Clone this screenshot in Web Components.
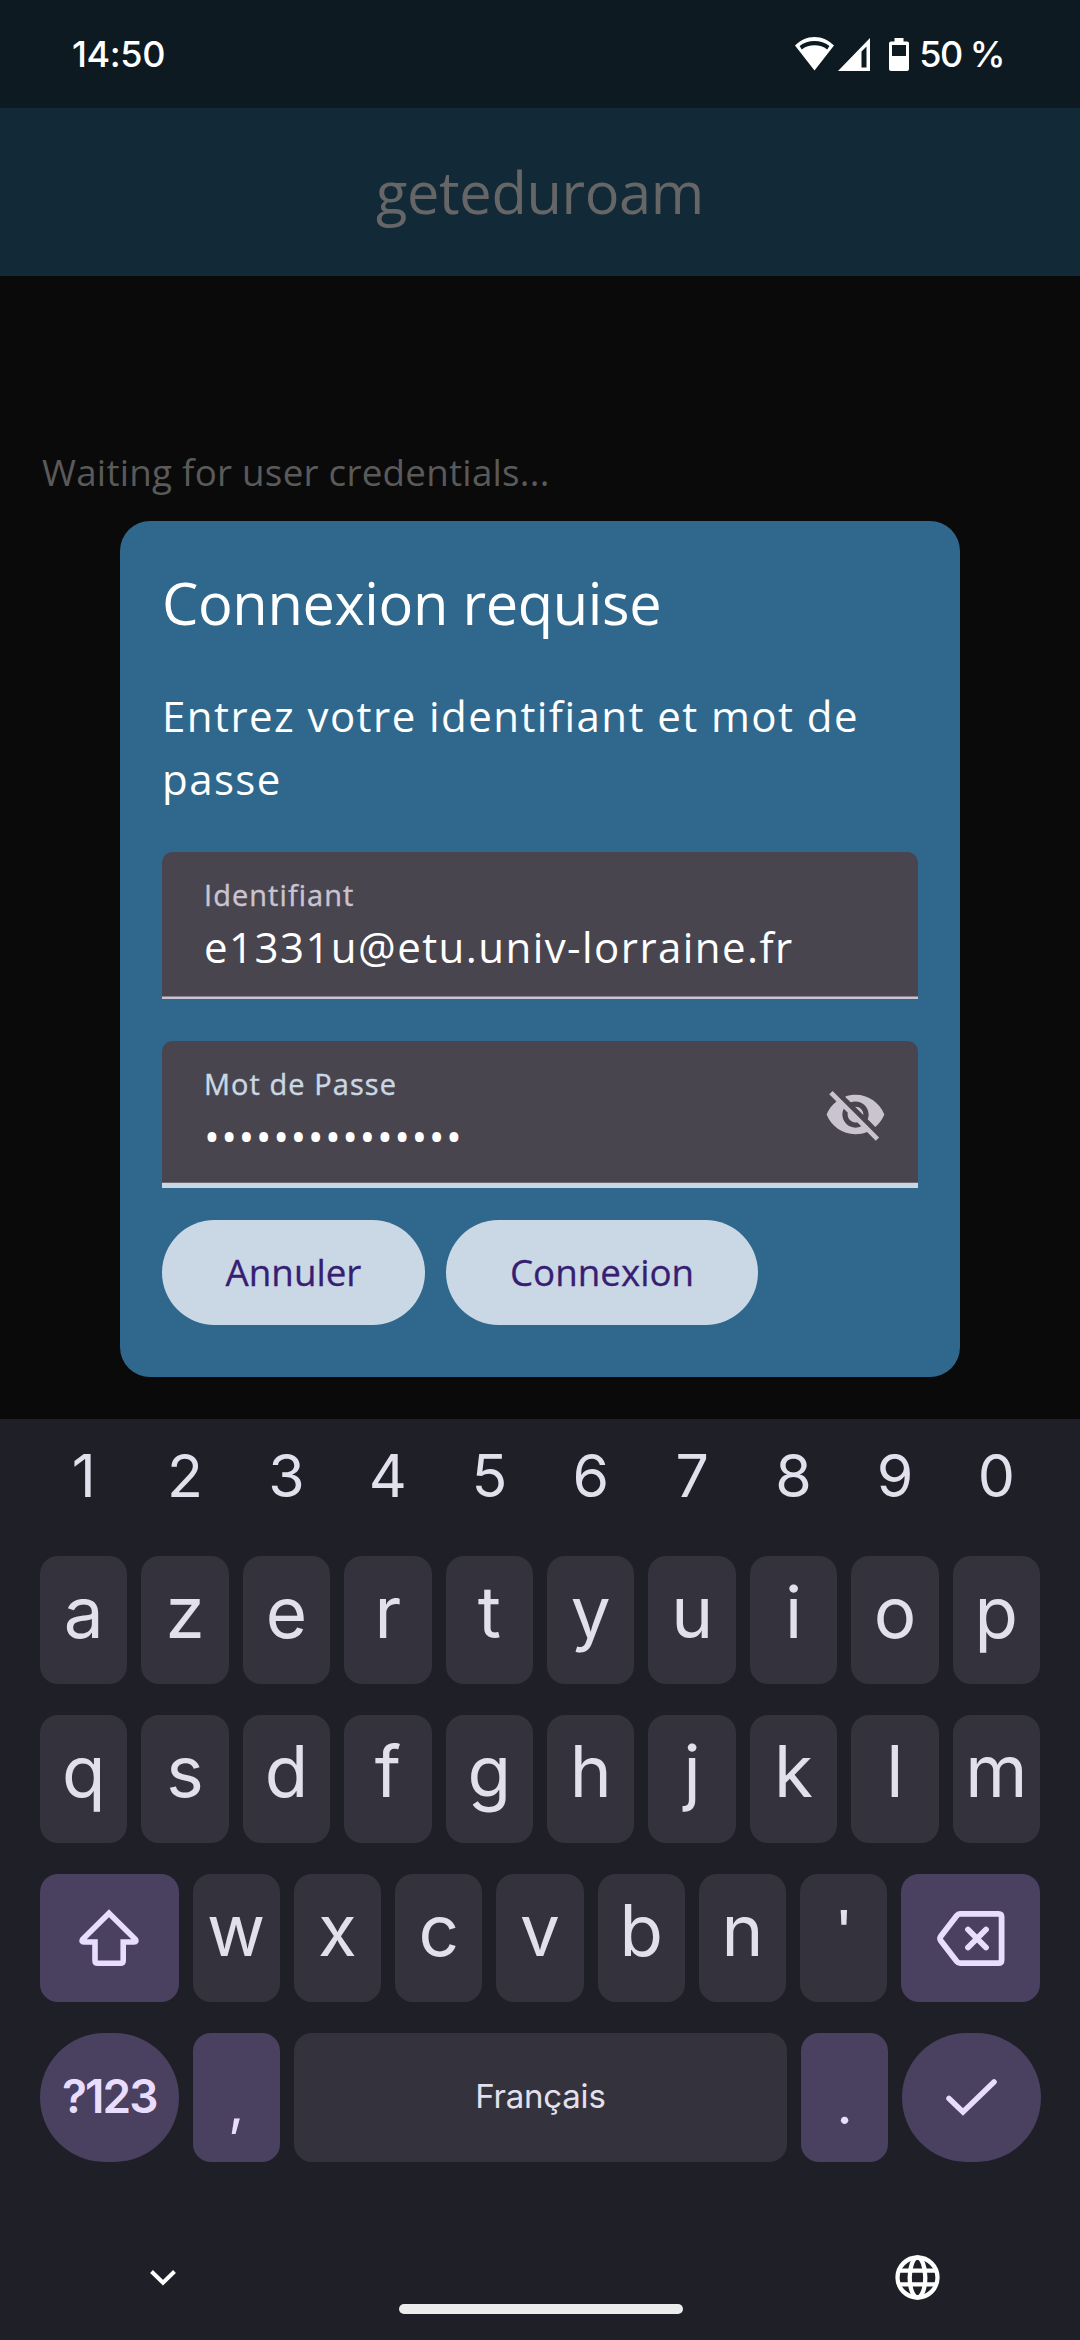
<!DOCTYPE html>
<html lang="fr"><head><meta charset="utf-8"><title>geteduroam</title>
<style>html,body{margin:0;background:#0a0a0a}</style></head><body>
<phone-screen></phone-screen>
<script>
const def=(name,html)=>customElements.define(name,class extends HTMLElement{
  constructor(){super();this.attachShadow({mode:'open'}).innerHTML=typeof html==='function'?html(this):html;}
});
def('status-bar',`<style>
:host{display:flex;align-items:center;justify-content:space-between;box-sizing:border-box;height:108px;padding:0 76px 0 72px;background:#0d1a22;color:#fff;font:500 36px Inter,sans-serif;letter-spacing:-.400px}
.r{display:flex;align-items:center;letter-spacing:-1.500px}svg{display:block}
</style><span>14:50</span><div class="r">
<svg width="39" height="34" viewBox="0 0 39 34" fill="#fff" style="margin-right:4px"><path fill-rule="evenodd" d="M19.5 0C12 0 5.2 3.2 0 8.600L19.500 33.500L39 8.600C33.800 3.200 27 0 19.500 0ZM4.600 9.100C8.700 5.400 14 3.900 19.500 3.900S30.300 5.400 34.400 9.100L32.200 12.400C28.600 9.500 24.200 8.200 19.500 8.200S10.400 9.500 6.800 12.400Z"/></svg>
<svg width="32" height="33" viewBox="0 0 32 33" fill="#fff" style="margin-right:19px"><path fill-rule="evenodd" d="M32 0V33H0ZM23.500 13.500V29.500H28.500V8.500Z"/></svg>
<svg width="20" height="33" viewBox="0 0 20 33" fill="#fff" style="margin-right:10px"><path fill-rule="evenodd" d="M5.500 0H14.500V3.500H18Q20 3.500 20 5.500V31Q20 33 18 33H2Q0 33 0 31V5.500Q0 3.500 2 3.500H5.500ZM3 7V18H17V7Z"/></svg>
<span>50 %</span></div>`);
def('app-header',`<style>:host{display:flex;align-items:center;justify-content:center;height:168px;box-sizing:border-box;padding-bottom:2px;background:#122937;color:#666;font:400 57.75px "Open Sans",sans-serif;letter-spacing:-.350px}</style><span><slot></slot></span>`);
def('text-field',el=>`<style>
:host{display:flex;align-items:center;box-sizing:border-box;height:147px;padding:0 31px 0 42px;background:#49454f;border-radius:10.5px 10.5px 0 0;color:#fff;font-family:"Open Sans",sans-serif;box-shadow:inset 0 -2.600px #cac4d0}
:host([focused]){box-shadow:inset 0 -5.250px #c9d8e4}
.c{flex:1;height:105px}.l{font-size:28.900px;-webkit-text-stroke:.4px currentColor;line-height:42px;padding-top:1px;height:41px;letter-spacing:1.100px;color:#cac4d0}
:host([focused]) .l{color:#c9d8e4}.v{font-size:42px;line-height:63px;letter-spacing:1.440px;font-variant-ligatures:none}
:host([focused]) .v{letter-spacing:1.500px}
</style><div class="c"><div class="l">${el.getAttribute('label')}</div><div class="v">${el.getAttribute('value')}</div></div><slot></slot>`);
def('pill-button',`<style>:host{display:flex;align-items:center;justify-content:center;box-sizing:border-box;height:105px;padding-bottom:2px;border-radius:53px;background:#c9d8e4;color:#381e72;font:500 36.75px "Open Sans",sans-serif;-webkit-text-stroke:.3px currentColor}</style><span><slot></slot></span>`);
def('login-dialog',`<style>
:host{position:absolute;left:120px;top:521px;width:840px;height:856px;box-sizing:border-box;padding:42px;border-radius:30px;background:#2f688c;color:#fff;font-family:"Open Sans",sans-serif;display:flex;flex-direction:column}
h1{margin:0 0 42px;font-size:57.750px;font-weight:400;line-height:79px;letter-spacing:-.380px}
p{margin:0 0 42px;font-size:42px;line-height:63px;letter-spacing:1.440px;font-variant-ligatures:none}
text-field+text-field{margin-top:42px}.b{display:flex;gap:21px;margin-top:32px}
</style><h1>Connexion requise</h1><p>Entrez votre identifiant et mot de<br>passe</p>
<text-field label="Identifiant" value="e1331u@etu.univ-lorraine.fr"></text-field>
<text-field focused label="Mot de Passe" value="•••••••••••••••"><svg width="63" height="63" viewBox="0 0 24 24" fill="#cac4d0"><path d="M12 7c2.760 0 5 2.240 5 5 0 .65-.13 1.260-.36 1.830l2.920 2.920c1.510-1.260 2.700-2.890 3.430-4.750-1.730-4.390-6-7.500-11-7.500-1.400 0-2.740.25-3.980.7l2.160 2.160C10.740 7.130 11.350 7 12 7zM2 4.270l2.280 2.280.46.46C3.080 8.300 1.780 10.020 1 12c1.730 4.390 6 7.500 11 7.500 1.550 0 3.030-.3 4.380-.84l.42.42L19.730 22 21 20.730 3.270 3 2 4.270zM7.530 9.800l1.550 1.550c-.05.21-.08.43-.08.65 0 1.660 1.340 3 3 3 .22 0 .44-.03.65-.08l1.550 1.550c-.67.33-1.410.53-2.200.53-2.760 0-5-2.240-5-5 0-.79.2-1.530.53-2.200zm4.310-.78l3.150 3.150.02-.16c0-1.660-1.340-3-3-3l-.17.01z"/></svg></text-field>
<div class="b"><pill-button style="width:263px">Annuler</pill-button><pill-button style="width:312px">Connexion</pill-button></div>`);
def('key-cap',`<style>
:host{display:flex;align-items:center;justify-content:center;flex:1 1 0;min-width:0;box-sizing:border-box;height:128px;padding-bottom:15.600px;border-radius:18px;background:#34333d;color:#e3e0ed;font:400 71px Inter,sans-serif}
:host([num]){background:none;height:106px;padding:7px 0 0;font-size:59px}
:host([alt]){background:#4a405f;color:#e9ddff}
:host([icon]){padding:0;flex:0 0 138.500px}
:host([low]){height:129px}
:host([round]){border-radius:64.500px;padding:0;flex:0 0 138.500px;font-size:46px;font-weight:600;letter-spacing:-2px}
:host([label]){padding-bottom:3px}
:host([space]){flex:0 0 493px;padding:0 0 3px;font-size:33px;letter-spacing:-.200px}
:host([punct]){flex:0 0 87.400px;padding:0;align-items:flex-start;font-size:56px;line-height:70px;padding-top:36px}
:host([quote]){padding:19px 0 0;align-items:flex-start;font-size:50px;line-height:70px;font-weight:600}
</style><span><slot></slot></span>`);
const keys=(s,a='')=>[...s].map(c=>`<key-cap ${a}>${c}</key-cap>`).join('');
def('soft-keyboard',`<style>
:host{display:flex;flex-direction:column;gap:31px;height:921px;background:#1f1f28}
.row{display:flex;gap:14px;padding:0 40px}svg{display:block}
.nav{display:grid;grid-template-columns:326px 1fr 325px;justify-items:center;align-items:start;height:147px}
.bar{width:284px;height:10px;border-radius:5px;background:#ececec;margin-top:111px}
</style>
<div class="row">${keys('1234567890','num')}</div><div class="row">${keys('azertyuiop')}</div><div class="row">${keys('qsdfghjklm')}</div>
<div class="row"><key-cap alt icon><svg width="60" height="58" viewBox="0 0 60 58" fill="none" stroke="#e9ddff" stroke-width="5.600"><path d="M30 4.200L56.300 30.300Q58 33 55 33H44.200V51.500Q44.200 54.300 41.400 54.300H18.800Q16 54.300 16 51.500V33H5Q2 33 3.700 30.300Z"/></svg></key-cap>${keys("wxcvbn")}<key-cap quote>'</key-cap><key-cap alt icon><svg width="68" height="55" viewBox="0 0 68 55" fill="none" stroke="#e9ddff" stroke-width="5.800" stroke-linecap="round"><path d="M23 2.900H61.500Q64.600 2.900 64.600 6V49Q64.600 52.100 61.500 52.100H23Q21 52.100 19.800 50.400L3.700 29.500Q2.400 27.500 3.700 25.500L19.800 4.600Q21 2.900 23 2.900ZM31 18.500L49 36.500M49 18.500L31 36.500"/></svg></key-cap></div>
<div class="row"><key-cap alt low round label>?123</key-cap><key-cap alt low punct>,</key-cap><key-cap low space>Français</key-cap><key-cap alt low punct>.</key-cap><key-cap alt low round><svg width="51" height="37" viewBox="0 0 51 37" fill="none" stroke="#e9ddff" stroke-width="5.500" stroke-linecap="round"><path d="M3 19.500L17 33L48 3"/></svg></key-cap></div>
<div class="nav"><svg style="margin-top:76px" width="28" height="18" viewBox="0 0 28 18" fill="none" stroke="#fff" stroke-width="4"><path d="M2.500 2.500L14 13.800L25.500 2.500"/></svg><div class="bar"></div><svg style="margin-top:62px" width="45" height="45" viewBox="0 0 45 45" fill="none" stroke="#fff" stroke-width="4.300"><circle cx="22.500" cy="22.500" r="20"/><ellipse cx="22.500" cy="22.500" rx="7.800" ry="20"/><path d="M4 15.700H41M4 29.300H41"/></svg></div>`);
def('phone-screen',`<style>
:host{display:flex;flex-direction:column;position:relative;width:1080px;height:2340px;overflow:hidden;background:#0a0a0a}
.m{flex:1;padding:169.500px 42px 0;color:#5a5a5a;font:400 36.750px/52.500px "Open Sans",sans-serif;letter-spacing:.250px;font-variant-ligatures:none}
</style><status-bar></status-bar><app-header>geteduroam</app-header><div class="m">Waiting for user credentials...</div><soft-keyboard></soft-keyboard><login-dialog></login-dialog>`);
</script></body></html>
